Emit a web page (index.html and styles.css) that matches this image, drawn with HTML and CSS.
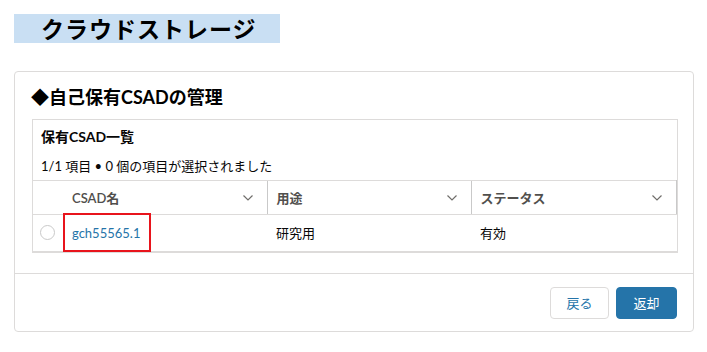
FILE: index.html
```html
<!DOCTYPE html>
<html lang="ja">
<head>
    <meta charset="UTF-8">
    <meta name="viewport" content="width=device-width, initial-scale=1.0">
    <title>クラウドストレージ</title>
    <link rel="stylesheet" href="styles.css">
</head>
<body>
    <div class="page-title">クラウドストレージ</div>
    <div class="card">
        <h2 class="card-title">◆自己保有CSADの管理</h2>
        <div class="list-box">
            <div class="list-title">保有CSAD一覧</div>
            <div class="list-count">1/1 項目 • 0 個の項目が選択されました</div>
            <table class="grid">
                <colgroup>
                    <col class="c-radio">
                    <col class="c-name">
                    <col class="c-use">
                    <col class="c-status">
                </colgroup>
                <thead>
                    <tr>
                        <th class="th-radio"></th>
                        <th class="th-first">
                            <div class="th-inner">CSAD名
                                <svg class="chev" viewBox="0 0 10 6" width="10" height="6"><path d="M0.5 0.5 L5 5 L9.5 0.5" fill="none" stroke="#706e6b" stroke-width="1.2"/></svg>
                            </div>
                        </th>
                        <th>
                            <div class="th-inner">用途
                                <svg class="chev" viewBox="0 0 10 6" width="10" height="6"><path d="M0.5 0.5 L5 5 L9.5 0.5" fill="none" stroke="#706e6b" stroke-width="1.2"/></svg>
                            </div>
                        </th>
                        <th class="th-last">
                            <div class="th-inner">ステータス
                                <svg class="chev" viewBox="0 0 10 6" width="10" height="6"><path d="M0.5 0.5 L5 5 L9.5 0.5" fill="none" stroke="#706e6b" stroke-width="1.2"/></svg>
                            </div>
                        </th>
                    </tr>
                </thead>
                <tbody>
                    <tr>
                        <td class="td-radio"><span class="radio"></span></td>
                        <td class="td-name"><a href="#">gch55565.1</a><span class="mark"></span></td>
                        <td>研究用</td>
                        <td>有効</td>
                    </tr>
                </tbody>
            </table>
        </div>
        <div class="card-footer">
            <button class="btn">戻る</button>
            <button class="btn btn-brand">返却</button>
        </div>
    </div>
</body>
</html>
```

FILE: styles.css
```css
* {
    padding: 0;
    margin: 0;
    box-sizing: border-box;
}
body {
    font-family: "Lato", "Noto Sans CJK JP", sans-serif;
    color: #080707;
    background-color: #fff;
}
.page-title {
    margin: 14px 0 0 14px;
    width: 266px;
    height: 29px;
    line-height: 29px;
    padding-left: 27px;
    background-color: #c9dff3;
    font-family: "Noto Sans CJK JP", sans-serif;
    font-weight: bold;
    font-size: 23px;
    letter-spacing: 1px;
    color: #000;
}
.card {
    margin: 28px 0 0 14px;
    width: 680px;
    border: 1px solid #dddbda;
    border-radius: 4px;
}
.card-title {
    margin: 13px 0 0 16px;
    font-size: 18px;
    line-height: 24px;
    font-weight: bold;
    color: #000;
}
.list-box {
    margin: 10px 15px 0 17px;
    border: 1px solid #dddbda;
    border-bottom: 2px solid #dddbda;
}
.list-title {
    padding: 7px 8px 0;
    font-size: 14px;
    line-height: 20px;
    font-weight: bold;
}
.list-count {
    padding: 9px 8px 4px;
    font-size: 13px;
    line-height: 20px;
}
.grid {
    width: 100%;
    border-collapse: collapse;
    table-layout: fixed;
    font-size: 13px;
}
.c-radio {
    width: 30px;
}
.c-name,
.c-use {
    width: 204px;
}
.grid th {
    height: 34px;
    border-top: 1px solid #dddbda;
    border-bottom: 1px solid #dddbda;
    border-left: 1px solid #c9c9c9;
    font-weight: 600;
    text-align: left;
    color: #514f4d;
}
.grid .th-radio,
.grid .th-first {
    border-left: none;
}
.grid .th-last {
    border-right: 1px solid #c9c9c9;
}
.th-inner {
    display: flex;
    align-items: center;
    justify-content: space-between;
    padding: 0 14px 0 9px;
}
.chev {
    display: block;
}
.grid td {
    height: 36px;
    padding-left: 9px;
}
.grid .td-radio {
    padding-left: 7px;
}
.radio {
    display: block;
    width: 15px;
    height: 15px;
    border: 1px solid #c9c9c9;
    border-radius: 50%;
}
.td-name {
    position: relative;
}
.td-name a {
    color: #2574a9;
    text-decoration: none;
}
.mark {
    position: absolute;
    left: 0;
    top: -2px;
    width: 88px;
    height: 39px;
    border: 2.5px solid #e8141c;
}
.card-footer {
    margin-top: 20px;
    border-top: 1px solid #dddbda;
    padding: 13px 16px 12px;
    display: flex;
    justify-content: flex-end;
    gap: 7px;
}
.btn {
    height: 32px;
    width: 59px;
    border: 1px solid #dddbda;
    border-radius: 4px;
    background-color: #fff;
    color: #2574a9;
    font-family: "Lato", "Noto Sans CJK JP", sans-serif;
    font-size: 13px;
}
.btn-brand {
    width: 61px;
    background-color: #2574a9;
    border-color: #2574a9;
    color: #fff;
}
```
